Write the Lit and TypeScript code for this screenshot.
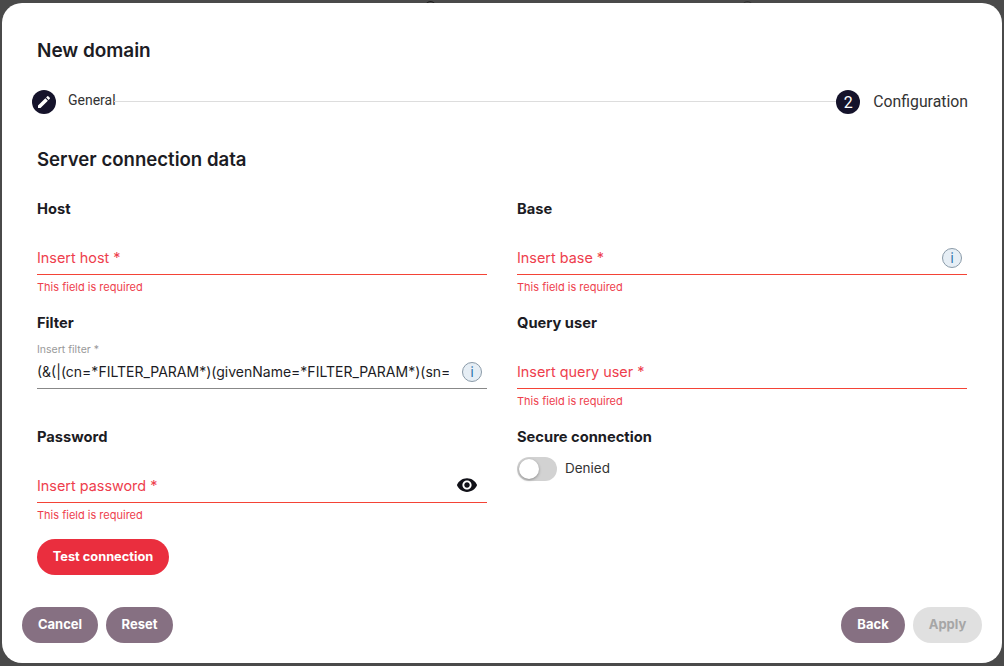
import { LitElement, html, css, svg } from "lit";
import { customElement } from "lit/decorators.js";

const eye = html`<svg class="eye" viewBox="0 0 24 24"><path fill="#111118" d="M12 4.5C7 4.5 2.73 7.61 1 12c1.73 4.39 6 7.5 11 7.5s9.27-3.11 11-7.5c-1.73-4.39-6-7.5-11-7.5zM12 17c-2.76 0-5-2.24-5-5s2.24-5 5-5 5 2.24 5 5-2.24 5-5 5zm0-8c-1.66 0-3 1.34-3 3s1.34 3 3 3 3-1.34 3-3-1.34-3-3-3z"/></svg>`;
const pencil = svg`<path fill="#fff" d="M3 17.25V21h3.75L17.81 9.94l-3.75-3.75L3 17.25zM20.71 7.04a1 1 0 0 0 0-1.41l-2.34-2.34a1 1 0 0 0-1.41 0l-1.83 1.83 3.75 3.75 1.83-1.83z"/>`;
const info = html`<span class="info">i</span>`;

@customElement("app-root")
export class AppRoot extends LitElement {
  static styles = css`
    :host { display: block; width: 1004px; height: 666px; background: #4a4a4a; font-family: "Inter", "Liberation Sans", sans-serif; color: #1c1c24; overflow: hidden; position: relative; }
    .page { box-sizing: border-box; height: 666px; padding: 3px 2px; position: relative; }
    .bump { position: absolute; top: 1px; width: 11px; height: 12px; box-sizing: border-box; border-radius: 50%; border: 1px solid #1d1d1d; }
    .b1 { left: 425px; }
    .b2 { left: 742px; border-color: #333; }
    .dialog { box-sizing: border-box; height: 660px; background: #fff; border-radius: 20px; padding: 36px 35px 0 35px; display: flex; flex-direction: column; position: relative; }
    h1 { margin: 0; font-size: 19px; line-height: 24px; font-weight: 600; letter-spacing: -0.05px; }
    .stepper { display: flex; align-items: center; margin: 27px 0 0 -5px; height: 24px; }
    .dot { width: 24px; height: 24px; border-radius: 50%; background: #15132b; color: #fff; display: flex; align-items: center; justify-content: center; font: 400 16px Roboto, sans-serif; flex: none; }
    .dot svg { width: 16px; height: 16px; }
    .s1 { font: 400 14px Roboto, sans-serif; margin: 0 -2px 4px 12px; color: #333; }
    .line { flex: 1; height: 1px; background: #ddd; margin-bottom: 2px; }
    .s2 { font: 400 15.8px Roboto, sans-serif; margin: 0 -1px 2px 13px; color: #333; }
    h2 { margin: 33px 0 0; font-size: 18.6px; line-height: 24px; font-weight: 600; }
    .grid { display: grid; grid-template-columns: 450px 450px; column-gap: 30px; grid-auto-rows: minmax(114px, auto); margin-top: 29px; }
    .label { font-size: 14.7px; line-height: 18px; font-weight: 700; }
    .field { height: 36px; margin-top: 21px; box-sizing: border-box; border-bottom: 1px solid #f44336; display: flex; align-items: flex-end; position: relative; padding-bottom: 6px; }
    .field.filled { border-bottom-color: #888; }
    .ph { flex: 1; font-size: 14.4px; line-height: 20px; color: #ee3e4d; white-space: nowrap; overflow: hidden; }
    .val { width: 412px; flex: none; font-size: 14px; line-height: 20px; color: #1c1c24; white-space: nowrap; overflow: hidden; }
    .float { position: absolute; left: 0; top: -10px; font-size: 10.5px; line-height: 13px; color: #999; }
    .err { font-size: 11px; line-height: 14px; color: #ee3e4d; margin-top: 5px; }
    .info { width: 20px; height: 20px; box-sizing: border-box; border-radius: 50%; border: 1px solid #8a9aa8; background: #e6eef5; color: #1f6fa8; font: 400 13px/18px "Inter", sans-serif; text-align: center; position: absolute; right: 5px; bottom: 6px; }
    .eye { position: absolute; right: 9px; bottom: 6px; width: 22px; height: 22px; }
    .toggle { display: flex; align-items: center; gap: 8px; margin-top: 11px; }
    .track { width: 40px; height: 24px; border-radius: 12px; background: #d2d2d2; position: relative; }
    .knob { position: absolute; left: 2px; top: 2px; width: 20px; height: 20px; border-radius: 50%; background: #fff; box-shadow: 0 1px 3px rgba(0,0,0,.35); }
    .toggle span { font-size: 13.5px; line-height: 16px; color: #333; margin-bottom: 2px; }
    .btn { border: 0; box-sizing: border-box; height: 36px; border-radius: 18px; padding: 0 0 2px; font: 700 13px "Inter", sans-serif; color: #fff; background: #867082; display: inline-flex; align-items: center; justify-content: center; }
    .w76 { width: 76px; }
    .w67 { width: 67px; }
    .w64 { width: 64px; }
    .w69 { width: 69px; }
    .red { background: #ea2e3e; width: 132px; font-size: 12.8px; margin-top: 17px; }
    .actions { display: flex; gap: 8px; margin: 32px -15px 0 -15px; }
    .sp { flex: 1; }
    .off { background: #e0e0e0; color: #a6a6a6; }
  `;

  private req(label: string, ph: string, extra: unknown = null, after: unknown = null) {
    return html`<div>
      <div class="label">${label}</div>
      <div class="field"><div class="ph">${ph}</div>${extra}</div>
      <div class="err">This field is required</div>
      ${after}
    </div>`;
  }

  render() {
    return html`<div class="page">
      <div class="bump b1"></div><div class="bump b2"></div>
      <div class="dialog">
      <h1>New domain</h1>
      <div class="stepper">
        <div class="dot"><svg viewBox="0 0 24 24">${pencil}</svg></div>
        <div class="s1">General</div>
        <div class="line"></div>
        <div class="dot">2</div>
        <div class="s2">Configuration</div>
      </div>
      <h2>Server connection data</h2>
      <div class="grid">
        ${this.req("Host", "Insert host *")}
        ${this.req("Base", "Insert base *", info)}
        <div>
          <div class="label">Filter</div>
          <div class="field filled">
            <div class="float">Insert filter *</div>
            <div class="val">(&amp;(|(cn=*FILTER_PARAM*)(givenName=*FILTER_PARAM*)(sn=*FILTER_PARAM*)))</div>
            ${info}
          </div>
        </div>
        ${this.req("Query user", "Insert query user *")}
        ${this.req("Password", "Insert password *", eye, html`<button class="btn red">Test connection</button>`)}
        <div>
          <div class="label">Secure connection</div>
          <div class="toggle"><div class="track"><div class="knob"></div></div><span>Denied</span></div>
        </div>
      </div>
      <div class="actions">
        <button class="btn w76">Cancel</button>
        <button class="btn w67">Reset</button>
        <div class="sp"></div>
        <button class="btn w64">Back</button>
        <button class="btn off w69">Apply</button>
      </div>
    </div></div>`;
  }
}
